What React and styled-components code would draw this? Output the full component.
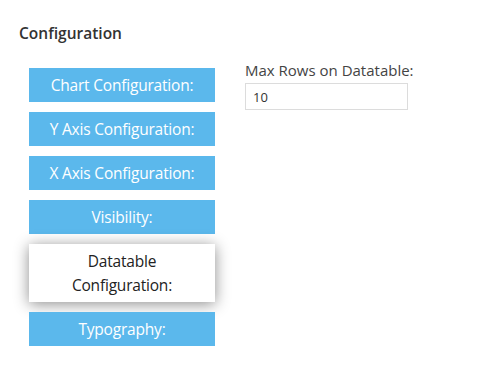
import React from "react";
import styled, { createGlobalStyle } from "styled-components";

const Global = createGlobalStyle`
  html, body { margin: 0; padding: 0; background: #fff; }
  body { font-family: "Open Sans", "Noto Sans", sans-serif; }
`;

const Page = styled.div`
  padding: 22px 19px 0 19px;
`;

const Title = styled.h2`
  margin: 0;
  font-size: 15.5px;
  font-weight: 600;
  color: #333;
  line-height: 22px;
`;

const Body = styled.div`
  display: flex;
  align-items: flex-start;
  gap: 30px;
  padding: 24px 0 0 10px;
`;

const Menu = styled.div`
  display: flex;
  flex-direction: column;
  gap: 10px;
  width: 186px;
`;

const MenuButton = styled.div`
  box-sizing: border-box;
  min-height: ${(p) => (p.$active ? "58px" : "34px")};
  padding: ${(p) => (p.$active ? "5px 20px" : "0 4px")};
  display: flex;
  align-items: center;
  justify-content: center;
  text-align: center;
  font-size: 15.5px;
  line-height: 24px;
  letter-spacing: -0.2px;
  white-space: ${(p) => (p.$active ? "normal" : "nowrap")};
  background: ${(p) => (p.$active ? "#fff" : "#5bb8ec")};
  color: ${(p) => (p.$active ? "#222" : "#fff")};
  box-shadow: ${(p) => (p.$active ? "0 2px 14px rgba(0,0,0,0.45)" : "none")};
`;

const Field = styled.div`
  display: flex;
  flex-direction: column;
  margin-top: -8px;
`;

const Label = styled.label`
  font-size: 15px;
  color: #444;
  line-height: 20px;
  margin-bottom: 3px;
`;

const Input = styled.input`
  box-sizing: border-box;
  width: 163px;
  height: 27px;
  border: 1px solid #dcdcdc;
  padding: 0 7px;
  font-family: "Open Sans", "Noto Sans", sans-serif;
  font-size: 13px;
  color: #333;
  outline: none;
`;

const items = [
  "Chart Configuration:",
  "Y Axis Configuration:",
  "X Axis Configuration:",
  "Visibility:",
  "Datatable Configuration:",
  "Typography:",
];

export default function App() {
  return (
    <Page>
      <Global />
      <Title>Configuration</Title>
      <Body>
        <Menu>
          {items.map((t) => (
            <MenuButton key={t} $active={t === "Datatable Configuration:"}>
              {t}
            </MenuButton>
          ))}
        </Menu>
        <Field>
          <Label>Max Rows on Datatable:</Label>
          <Input defaultValue="10" />
        </Field>
      </Body>
    </Page>
  );
}
